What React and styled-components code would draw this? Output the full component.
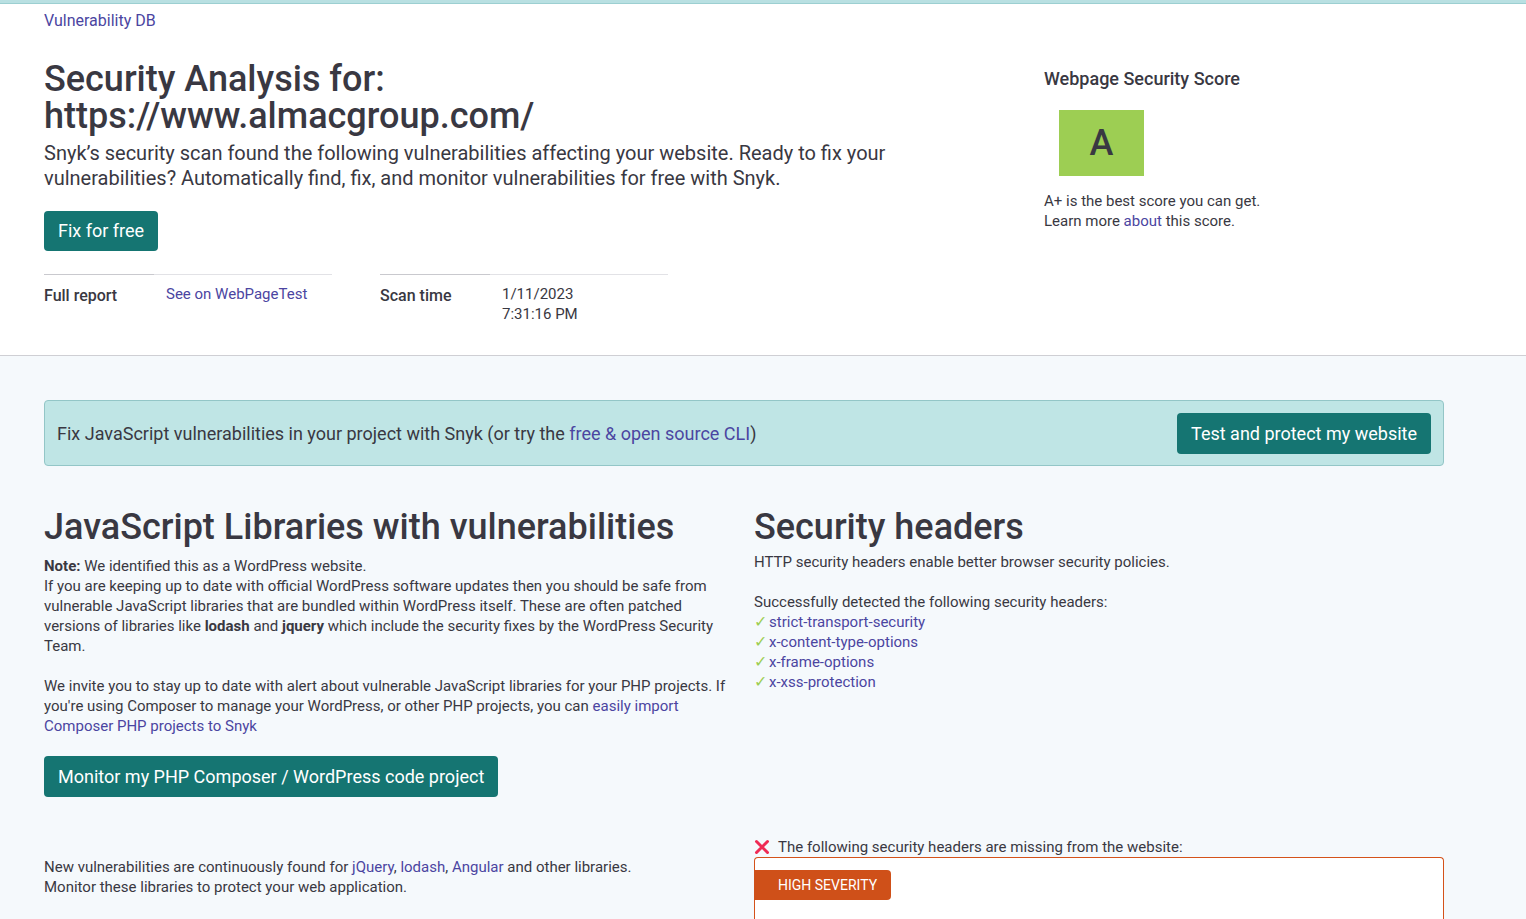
import React from "react";
import styled, { createGlobalStyle } from "styled-components";

const GlobalStyle = createGlobalStyle`
  html, body {
    margin: 0;
    padding: 0;
    background: #f5f9fc;
  }
  body {
    font-family: Roboto, "Liberation Sans", sans-serif;
    color: #393842;
  }
  * {
    box-sizing: border-box;
  }
`;

const Page = styled.div`
  min-height: 100vh;
  border-top: 3px solid #b9e0e2;
`;

const Hero = styled.header`
  background: #fff;
  border-top: 1px solid #9ccfd1;
  border-bottom: 1px solid #cfcfd4;
  padding: 5px 44px 31px;
`;

const Crumb = styled.a`
  display: block;
  font-size: 16px;
  line-height: 24px;
  color: #4b45a1;
  text-decoration: none;
`;

const HeroGrid = styled.div`
  display: grid;
  grid-template-columns: 1fr 438px;
  gap: 40px;
  margin-top: 28px;
`;

const Title = styled.h1`
  margin: 0;
  font-size: 36px;
  line-height: 37px;
  font-weight: 500;
  color: #393842;
`;

const Lead = styled.p`
  margin: 6px 0 0;
  font-size: 20px;
  line-height: 25px;
  font-weight: 400;
  max-width: 860px;
`;

const Button = styled.a`
  display: inline-block;
  background: #157572;
  color: #fff;
  font-size: 18px;
  line-height: ${(p) => p.$h || 40}px;
  padding: 0 14px;
  border-radius: 4px;
  text-decoration: none;
  white-space: nowrap;
`;

const ButtonRow = styled.div`
  margin-top: ${(p) => p.$top || 0}px;
`;

const Facts = styled.div`
  display: flex;
  gap: 48px;
  margin-top: 23px;
`;

const Fact = styled.div`
  display: grid;
  grid-template-columns: 110px 178px;
`;

const FactLabel = styled.div`
  border-top: 1px solid #c9c9ce;
  padding-top: 9px;
  font-size: 16px;
  line-height: 24px;
  font-weight: 500;
`;

const FactValue = styled.div`
  border-top: 1px solid #e2e2e6;
  padding: 9px 0 0 12px;
  font-size: 15px;
  line-height: 20px;
`;

const Link = styled.a`
  color: #4b45a1;
  text-decoration: none;
`;

const ScoreTitle = styled.h3`
  margin: 6px 0 0;
  font-size: 18px;
  line-height: 24px;
  font-weight: 500;
`;

const Grade = styled.div`
  width: 85px;
  height: 66px;
  margin: 19px 0 0 15px;
  background: #9dce53;
  display: flex;
  align-items: center;
  justify-content: center;
  font-size: 36px;
  font-weight: 500;
  color: #393842;
`;

const Small = styled.p`
  margin: ${(p) => p.$top || 0}px 0 0;
  font-size: 15px;
  line-height: 20px;
  font-weight: 400;
`;

const Main = styled.main`
  padding: 44px 44px 0;
  max-width: 1488px;
`;

const Banner = styled.div`
  display: flex;
  align-items: center;
  justify-content: space-between;
  background: #bfe5e5;
  border: 1px solid #93c6c7;
  border-radius: 4px;
  padding: 12px 12px 11px;
  font-size: 18px;
  line-height: 41px;
`;

const Columns = styled.div`
  display: grid;
  grid-template-columns: 1fr 1fr;
  gap: 20px;
  margin-top: 40px;
`;

const Heading = styled.h2`
  margin: 0;
  font-size: 36px;
  line-height: 42px;
  font-weight: 500;
  color: #393842;
`;

const Check = styled.span`
  color: #9dce53;
  font-size: 16px;
  margin-right: 2px;
`;

const Missing = styled.div`
  margin-top: 145px;
  font-size: 15px;
  line-height: 20px;
  display: flex;
  align-items: center;
`;

const Cross = styled.svg`
  width: 16px;
  height: 16px;
  margin-right: 8px;
  flex: none;
`;

const SeverityBox = styled.div`
  border: 1px solid #d4521a;
  border-bottom: none;
  border-radius: 4px 4px 0 0;
  background: #fff;
  padding-top: 12px;
  height: 80px;
`;

const Badge = styled.span`
  display: inline-block;
  margin-left: -1px;
  background: #cf5019;
  color: #fff;
  font-size: 14px;
  line-height: 30px;
  padding: 0 14px 0 24px;
  border-radius: 0 4px 4px 0;
  text-transform: uppercase;
`;

export default function App() {
  return (
    <Page>
      <GlobalStyle />
      <Hero>
        <Crumb href="#">Vulnerability DB</Crumb>
        <HeroGrid>
          <div>
            <Title>
              Security Analysis for:
              <br />
              https://www.almacgroup.com/
            </Title>
            <Lead>
              Snyk’s security scan found the following vulnerabilities affecting your website. Ready to fix
              your vulnerabilities? Automatically find, fix, and monitor vulnerabilities for free with Snyk.
            </Lead>
            <ButtonRow $top={20}>
              <Button href="#">Fix for free</Button>
            </ButtonRow>
            <Facts>
              <Fact>
                <FactLabel>Full report</FactLabel>
                <FactValue>
                  <Link href="#">See on WebPageTest</Link>
                </FactValue>
              </Fact>
              <Fact>
                <FactLabel>Scan time</FactLabel>
                <FactValue>
                  1/11/2023
                  <br />
                  7:31:16 PM
                </FactValue>
              </Fact>
            </Facts>
          </div>
          <div>
            <ScoreTitle>Webpage Security Score</ScoreTitle>
            <Grade>A</Grade>
            <Small $top={15}>
              A+ is the best score you can get.
              <br />
              Learn more <Link href="#">about</Link> this score.
            </Small>
          </div>
        </HeroGrid>
      </Hero>

      <Main>
        <Banner>
          <span>
            Fix JavaScript vulnerabilities in your project with Snyk (or try the{" "}
            <Link href="#">free &amp; open source CLI</Link>)
          </span>
          <Button href="#" $h={41}>
            Test and protect my website
          </Button>
        </Banner>

        <Columns>
          <div>
            <Heading>JavaScript Libraries with vulnerabilities</Heading>
            <Small $top={8}>
              <b>Note:</b> We identified this as a WordPress website.
              <br />
              If you are keeping up to date with official WordPress software updates then you should be safe
              from vulnerable JavaScript libraries that are bundled within WordPress itself. These are often
              patched versions of libraries like <b>lodash</b> and <b>jquery</b> which include the security
              fixes by the WordPress Security Team.
            </Small>
            <Small $top={20}>
              We invite you to stay up to date with alert about vulnerable JavaScript libraries for your PHP
              projects. If you're using Composer to manage your WordPress, or other PHP projects, you can{" "}
              <Link href="#">easily import Composer PHP projects to Snyk</Link>
            </Small>
            <ButtonRow $top={20}>
              <Button href="#" $h={41}>
                Monitor my PHP Composer / WordPress code project
              </Button>
            </ButtonRow>
            <Small $top={60}>
              New vulnerabilities are continuously found for <Link href="#">jQuery</Link>,{" "}
              <Link href="#">lodash</Link>, <Link href="#">Angular</Link> and other libraries.
              <br />
              Monitor these libraries to protect your web application.
            </Small>
          </div>
          <div>
            <Heading>Security headers</Heading>
            <Small $top={4}>HTTP security headers enable better browser security policies.</Small>
            <Small $top={20}>Successfully detected the following security headers:</Small>
            {["strict-transport-security", "x-content-type-options", "x-frame-options", "x-xss-protection"].map(
              (h) => (
                <Small key={h}>
                  <Check>✓</Check>
                  <Link href="#">{h}</Link>
                </Small>
              )
            )}
            <Missing>
              <Cross viewBox="0 0 16 16">
                <path d="M2.5 2.5 L13.5 13.5 M13.5 2.5 L2.5 13.5" stroke="#ef2b54" strokeWidth="3" strokeLinecap="round" />
              </Cross>
              The following security headers are missing from the website:
            </Missing>
            <SeverityBox>
              <Badge>High severity</Badge>
            </SeverityBox>
          </div>
        </Columns>
      </Main>
    </Page>
  );
}
